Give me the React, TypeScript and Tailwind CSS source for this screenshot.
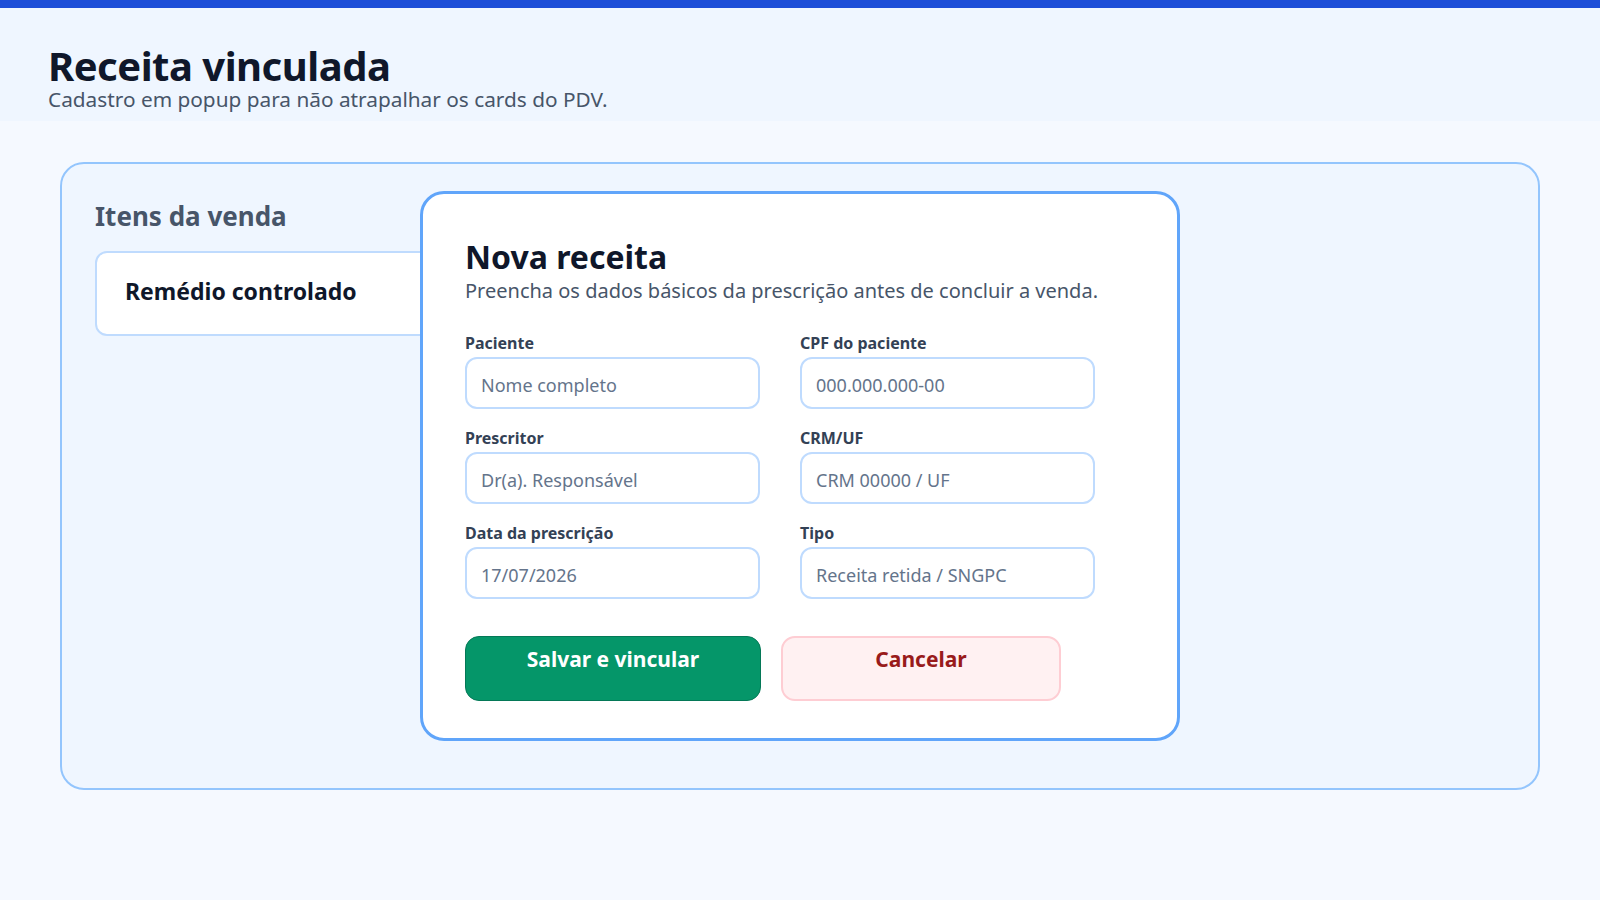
import React from "react";

function Field({ label, placeholder }: { label: string; placeholder: string }) {
  return (
    <label className="flex flex-col">
      <span className="text-[16px] leading-[20px] font-bold text-[#334155]">{label}</span>
      <input
        className="mt-1 h-[52px] w-full rounded-xl border-2 border-[#bfdbfe] bg-white px-[14px] pt-[3px] text-[18px] text-[#0f172a] outline-none placeholder:text-[#64748b]"
        placeholder={placeholder}
      />
    </label>
  );
}

export default function App() {
  return (
    <div className="min-h-screen bg-[#f5f9ff] font-['Noto_Sans',sans-serif]">
      <div className="h-2 bg-[#1d4ed8]" />
      <header className="bg-[#eff6ff] px-12 pt-[37px] pb-[10px]">
        <h1 className="text-[40px] leading-[42px] font-bold tracking-[-0.5px] text-[#0f172a]">
          Receita vinculada
        </h1>
        <p className="text-[20.8px] leading-[24px] text-[#475569]">
          Cadastro em popup para não atrapalhar os cards do PDV.
        </p>
      </header>
      <main className="px-[60px] pt-[41px]">
        <section className="relative h-[628px] rounded-3xl border-2 border-[#93c5fd] bg-[#eff6ff] px-[33px] pt-[35px]">
          <h2 className="text-[26px] leading-[34px] font-bold text-[#475569]">Itens da venda</h2>
          <div className="mt-[18px] h-[85px] w-[620px] rounded-xl border-2 border-[#bfdbfe] bg-white px-[28px] pt-[23px]">
            <div className="text-[23px] leading-[30px] font-bold text-[#0f172a]">Remédio controlado</div>
          </div>

          <div className="absolute left-[358px] top-[27px] w-[760px] rounded-3xl border-[3px] border-[#60a5fa] bg-white pl-[42px] pr-10 pt-[43px] pb-[37px]">
            <h3 className="text-[32px] leading-[40px] font-bold text-[#0f172a]">Nova receita</h3>
            <p className="text-[20px] leading-[28px] text-[#475569]">
              Preencha os dados básicos da prescrição antes de concluir a venda.
            </p>
            <div className="mt-7 grid grid-cols-[295px_295px] gap-x-10 gap-y-[19px]">
              <Field label="Paciente" placeholder="Nome completo" />
              <Field label="CPF do paciente" placeholder="000.000.000-00" />
              <Field label="Prescritor" placeholder="Dr(a). Responsável" />
              <Field label="CRM/UF" placeholder="CRM 00000 / UF" />
              <Field label="Data da prescrição" placeholder="17/07/2026" />
              <Field label="Tipo" placeholder="Receita retida / SNGPC" />
            </div>
            <div className="mt-[37px] flex gap-5">
              <button className="flex h-[65px] w-[296px] items-start justify-center rounded-[14px] border border-[#047857] bg-[#059669] pt-[8px] text-[21px] leading-[28px] font-bold text-white">
                Salvar e vincular
              </button>
              <button className="flex h-[65px] w-[280px] items-start justify-center rounded-[14px] border-2 border-[#fecdd3] bg-[#fff1f2] pt-[7px] text-[21px] leading-[28px] font-bold text-[#991b1b]">
                Cancelar
              </button>
            </div>
          </div>
        </section>
      </main>
    </div>
  );
}
